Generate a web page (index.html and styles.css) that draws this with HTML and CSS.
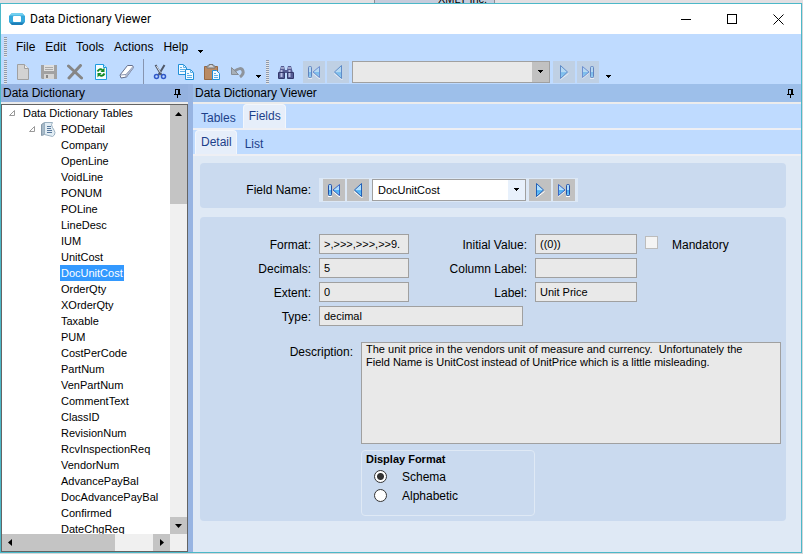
FILE: index.html
```html
<!DOCTYPE html>
<html lang="en">
<head>
    <meta charset="UTF-8">
    <meta name="viewport" content="width=device-width, initial-scale=1.0">
    <title>Data Dictionary Viewer</title>
    <link rel="stylesheet" href="styles.css">
</head>
<body>
    <!-- shared icon shapes -->
    <svg class="defs" width="0" height="0" aria-hidden="true">
        <linearGradient id="nav-fill" x1="0" y1="0" x2="0" y2="1">
            <stop offset="0" stop-color="#a8d8fa"/>
            <stop offset=".5" stop-color="#b4e2ff"/>
            <stop offset=".55" stop-color="#4aaef2"/>
            <stop offset="1" stop-color="#7cd0fb"/>
        </linearGradient>
        <symbol id="first" viewBox="0 0 16 16">
            <path d="M2 14.500h4M7 9.500l6 5h1" stroke="#fff" fill="none"/>
            <rect x="2.500" y="2.500" width="3" height="11" rx="1" fill="url(#nav-fill)" stroke="#2450a8"/>
            <path d="M13.500 2.500v11L7 8z" fill="url(#nav-fill)" stroke="#3b66c4"/>
        </symbol>
        <symbol id="prev" viewBox="0 0 16 16">
            <path d="M4 9.500l7.500 6h1" stroke="#fff" fill="none"/>
            <path d="M11.500 1.500v13L4.500 8z" fill="url(#nav-fill)" stroke="#2060b8"/>
        </symbol>
        <symbol id="next" viewBox="0 0 16 16">
            <path d="M4.500 15.500l8-6" stroke="#fff" fill="none"/>
            <path d="M4.500 1.500v13L11.500 8z" fill="url(#nav-fill)" stroke="#2060b8"/>
        </symbol>
        <symbol id="last" viewBox="0 0 16 16">
            <path d="M10 14.500h4M2.500 14.500l6-5" stroke="#fff" fill="none"/>
            <rect x="10.500" y="2.500" width="3" height="11" rx="1" fill="url(#nav-fill)" stroke="#2450a8"/>
            <path d="M2.500 2.500v11L9 8z" fill="url(#nav-fill)" stroke="#3b66c4"/>
        </symbol>
        <symbol id="down" viewBox="0 0 5 3"><path d="M0 0h5v1H4v1H3v1H2V2H1V1H0z"/></symbol>
        <symbol id="pin" viewBox="0 0 7 9"><path d="M1 0h5v5h1v1H4v3H3V6H0V5h1zM2 1v4h2V1z" fill-rule="evenodd"/></symbol>
    </svg>

    <div class="backdrop"><span class="backdrop-tab">XMLT Inc.</span></div>

    <main class="window">
        <header class="titlebar">
            <svg class="logo" width="16" height="14" viewBox="0 0 16 14">
                <path d="M3 1h10l3 3v6l-3 3H3l-3-3V4z" fill="#35a8dc"/>
                <path d="M3 1h10l2.500 2.500H.5z" fill="#72d0f0"/>
                <path d="M3 13h10l2.500-2.500H.5z" fill="#1d7fb8"/>
                <rect x="4" y="4" width="8" height="6" rx="1" fill="#fff"/>
            </svg>
            <h1>Data Dictionary Viewer</h1>
            <div class="caption-buttons">
                <button aria-label="Minimize"><svg width="11" height="11"><path d="M0 5.500h10" stroke="#000"/></svg></button>
                <button aria-label="Maximize"><svg width="11" height="11"><rect x=".5" y=".5" width="9" height="9" fill="none" stroke="#000"/></svg></button>
                <button aria-label="Close"><svg width="11" height="11"><path d="M.5.500l10 10M10.500.500l-10 10" stroke="#000"/></svg></button>
            </div>
        </header>

        <nav class="menubar">
            <span class="grip"></span>
            <button>File</button>
            <button>Edit</button>
            <button>Tools</button>
            <button>Actions</button>
            <button>Help</button>
            <svg class="more" width="5" height="3"><use href="#down"/></svg>
        </nav>

        <div class="toolbar">
            <div class="tools">
                <span class="grip"></span>
                <button aria-label="New"><svg width="16" height="16"><path d="M2.500.5h7l4 4v11h-11z" fill="#d2d2d2" stroke="#a0a0a0"/><path d="M9.500.5v4h4" fill="#eee" stroke="#a0a0a0"/></svg></button>
                <button aria-label="Save"><svg width="16" height="16"><path d="M0 1h16v14H1l-1-1z" fill="#a2a2a2"/><path d="M3 1h10v6H3z" fill="#e0e0e0"/><path d="M4 3.500h8M4 5.500h8" stroke="#aaa"/><path d="M3 10h10v5H3z" fill="#d4d4d4"/><path d="M5 11h2v3H5z" fill="#888"/></svg></button>
                <button aria-label="Delete"><svg width="16" height="16"><path d="M1.500 2l13 12M13.500 1.500L2 14" stroke="#868686" stroke-width="3" stroke-linecap="round"/></svg></button>
                <button aria-label="Refresh"><svg width="16" height="16"><path d="M2.500.5h8l3 3v12h-11z" fill="#f4fcff" stroke="#1c9be0"/><path d="M10.500.5v3h3" fill="#c8ecff" stroke="#1c9be0"/><path d="M4.500 7.500q2-3.500 5-1.500M11.500 9.500q-2 3.500-5 1.500" stroke="#128a24" stroke-width="2" fill="none"/><path d="M11.500 3.500v4.500H7.500zM4.500 13.500V9h4z" fill="#128a24"/></svg></button>
                <button aria-label="Clear"><svg width="16" height="16"><path d="M8.500 1.500h5l1 2-7 9.500-5.500 1-1-3z" fill="#fff" stroke="#66708c"/><path d="M1.500 11l5.500-.500 7-8M7 10.500v3" stroke="#8a94b0" fill="none"/><path d="M7 10.500l7-8 .5 1-7 9.500z" fill="#a8b4cc"/></svg></button>
                <span class="divider"></span>
                <button aria-label="Cut"><svg width="16" height="16"><path d="M3.500 1l6 10M12.500 1l-6 10" stroke="#505868" stroke-width="2"/><path d="M4.500 2l4 6.500" stroke="#dfe5ee"/><circle cx="4.500" cy="12.500" r="2" fill="none" stroke="#3058c8" stroke-width="1.500"/><circle cx="11.500" cy="12.500" r="2" fill="none" stroke="#3058c8" stroke-width="1.500"/></svg></button>
                <button aria-label="Copy"><svg width="17" height="16"><path d="M.5.5h5l3 3v7h-8z" fill="#f2faff" stroke="#2090d8"/><path d="M5.500.5v3h3M2 3.500h2M2 5.500h5M2 7.500h5" stroke="#60b0e8" fill="none"/><path d="M7.500 5.500h5l3 3v7h-8z" fill="#f2faff" stroke="#2090d8"/><path d="M12.500 5.500v3h3M9 9.500h2M9 11.500h5M9 13.500h5" stroke="#60b0e8" fill="none"/></svg></button>
                <button aria-label="Paste"><svg width="17" height="16"><path d="M.5 2.500h13v13H.5z" fill="#b98a64" stroke="#966844"/><path d="M3 4V2h2V.5h4V2h2v2z" fill="#d4d4d8" stroke="#777"/><path d="M8.500 6.500h4l3 3v6h-7z" fill="#f2faff" stroke="#2090d8"/><path d="M10 9.500h2M10 11.500h4M10 13.500h4" stroke="#60b0e8"/></svg></button>
                <button aria-label="Undo"><svg width="16" height="16"><path d="M4 7.500q7-5.500 9-.5 1 3-3 6" fill="none" stroke="#8e949c" stroke-width="3"/><path d="M1.500 3.500v7h7z" fill="#a8b0b8" stroke="#888e96"/></svg></button>
                <svg class="more" width="5" height="3"><use href="#down"/></svg>
            </div>
            <div class="finder">
                <span class="grip"></span>
                <button class="find" aria-label="Search"><svg width="16" height="14"><path d="M3 1h3l1 4h2l1-4h3l2 7v5H9V8H7v5H1V8z" fill="#555c94"/><path d="M3 3h3M10 3h3" stroke="#e4e6fa"/><path d="M3.500 5v7M11.500 5v7" stroke="#b8bce4" stroke-width="2"/><path d="M.5 7.500h6v6h-6zM9.500 7.500h6v6h-6z" fill="none" stroke="#34386c"/></svg></button>
                <button class="nav-btn" aria-label="First record" disabled><svg width="16" height="16"><use href="#first"/></svg></button>
                <button class="nav-btn" aria-label="Previous record" disabled><svg width="16" height="16"><use href="#prev"/></svg></button>
                <span class="combo combo-disabled">
                    <select aria-label="Record" disabled><option></option></select>
                    <span class="combo-arrow"><svg width="5" height="3"><use href="#down"/></svg></span>
                </span>
                <button class="nav-btn" aria-label="Next record" disabled><svg width="16" height="16"><use href="#next"/></svg></button>
                <button class="nav-btn" aria-label="Last record" disabled><svg width="16" height="16"><use href="#last"/></svg></button>
                <svg class="more" width="5" height="3"><use href="#down"/></svg>
            </div>
        </div>

        <div class="workspace">
            <!-- tree pane -->
            <aside class="tree-pane">
                <h2 class="pane-title">Data Dictionary <svg width="7" height="9"><use href="#pin"/></svg></h2>
                <div class="tree-box">
                    <ul class="tree">
                        <li class="root"><svg width="7" height="7"><path d="M.5 5.500h5v-5z" fill="#fff" stroke="#999"/></svg><span>Data Dictionary Tables</span></li>
                        <li class="branch"><svg width="7" height="7"><path d="M.5 5.500h5v-5z" fill="#fff" stroke="#999"/></svg>
                            <svg class="table-icon" width="15" height="15"><path d="M.5 2.500l3-2v12l-3 1z" fill="#a8bac8" stroke="#8498a8"/><path d="M3.500.5h8q-2 2 0 5t2.500 5q0 3-2.500 4l-8-2z" fill="#e2edf4" stroke="#9ab0c0"/><path d="M6 4.500h4M6 6.500h4M6 8.500h5M6 10.500h5" stroke="#58789c"/></svg><span>PODetail</span></li>
                        <li>Company</li>
                        <li>OpenLine</li>
                        <li>VoidLine</li>
                        <li>PONUM</li>
                        <li>POLine</li>
                        <li>LineDesc</li>
                        <li>IUM</li>
                        <li>UnitCost</li>
                        <li><span class="selected">DocUnitCost</span></li>
                        <li>OrderQty</li>
                        <li>XOrderQty</li>
                        <li>Taxable</li>
                        <li>PUM</li>
                        <li>CostPerCode</li>
                        <li>PartNum</li>
                        <li>VenPartNum</li>
                        <li>CommentText</li>
                        <li>ClassID</li>
                        <li>RevisionNum</li>
                        <li>RcvInspectionReq</li>
                        <li>VendorNum</li>
                        <li>AdvancePayBal</li>
                        <li>DocAdvancePayBal</li>
                        <li>Confirmed</li>
                        <li>DateChgReq</li>
                    </ul>
                    <div class="scroll-v">
                        <span class="scroll-thumb"><svg width="7" height="4"><path d="M0 4h7L3.500 0z"/></svg></span>
                        <span class="scroll-end"><svg width="7" height="4"><path d="M0 0h7L3.500 4z"/></svg></span>
                    </div>
                    <div class="scroll-h">
                        <span class="scroll-thumb"><svg width="4" height="7"><path d="M4 0v7L0 3.500z"/></svg></span>
                        <span class="scroll-end"><svg width="4" height="7"><path d="M0 0v7l4-3.500z"/></svg></span>
                    </div>
                    <div class="scroll-corner"></div>
                </div>
            </aside>

            <!-- viewer pane -->
            <section class="viewer-pane">
                <h2 class="pane-title">Data Dictionary Viewer <svg width="7" height="9"><use href="#pin"/></svg></h2>
                <div class="tabs tabs-outer">
                    <button class="tab">Tables</button>
                    <button class="tab active">Fields</button>
                </div>
                <div class="tabs">
                    <button class="tab active">Detail</button>
                    <button class="tab">List</button>
                </div>
                <form class="detail">
                    <div class="panel picker">
                        <label for="field-name">Field Name:</label>
                        <div class="picker-nav">
                            <button type="button" class="nav-btn" aria-label="First field"><svg width="16" height="16"><use href="#first"/></svg></button>
                            <button type="button" class="nav-btn" aria-label="Previous field"><svg width="16" height="16"><use href="#prev"/></svg></button>
                            <span class="combo">
                                <select id="field-name"><option>DocUnitCost</option></select>
                                <span class="combo-arrow"><svg width="5" height="3"><use href="#down"/></svg></span>
                            </span>
                            <button type="button" class="nav-btn" aria-label="Next field"><svg width="16" height="16"><use href="#next"/></svg></button>
                            <button type="button" class="nav-btn" aria-label="Last field"><svg width="16" height="16"><use href="#last"/></svg></button>
                        </div>
                    </div>

                    <div class="panel">
                        <div class="fields">
                            <label class="row-start" for="format">Format:</label>
                            <input id="format" type="text" value="&gt;,&gt;&gt;&gt;,&gt;&gt;&gt;,&gt;&gt;9." readonly>
                            <label for="initial">Initial Value:</label>
                            <input id="initial" type="text" value="((0))" readonly>
                            <div class="mandatory">
                                <input id="mandatory" type="checkbox" disabled>
                                <label for="mandatory">Mandatory</label>
                            </div>
                            <label class="row-start" for="decimals">Decimals:</label>
                            <input id="decimals" type="text" value="5" readonly>
                            <label for="column-label">Column Label:</label>
                            <input id="column-label" type="text" value="" readonly>
                            <label class="row-start" for="extent">Extent:</label>
                            <input id="extent" type="text" value="0" readonly>
                            <label for="label">Label:</label>
                            <input id="label" type="text" value="Unit Price" readonly>
                            <label class="row-start" for="type">Type:</label>
                            <input id="type" class="wide" type="text" value="decimal" readonly>
                        </div>
                        <div class="description">
                            <label for="description">Description:</label>
                            <textarea id="description" readonly>The unit price in the vendors unit of measure and currency.  Unfortunately the
Field Name is UnitCost instead of UnitPrice which is a little misleading.</textarea>
                        </div>
                        <fieldset class="display-format">
                            <legend>Display Format</legend>
                            <label><input type="radio" name="display" checked>Schema</label>
                            <label><input type="radio" name="display">Alphabetic</label>
                        </fieldset>
                    </div>
                </form>
            </section>
        </div>
    </main>
</body>
</html>
```
FILE: styles.css
```css
* {
    margin: 0;
    padding: 0;
    box-sizing: border-box;
}

body {
    display: flex;
    flex-direction: column;
    height: 100vh;
    overflow: hidden;
    background: #d6d6d8;
    color: #000;
    font: 12px/16px "Liberation Sans", Arial, sans-serif;
}

button,
input,
select,
textarea {
    font: inherit;
    color: inherit;
    border: none;
    background: none;
}

svg {
    display: block;
    flex: none;
}

.defs {
    position: absolute;
}

/* strip of the application behind the window */
.backdrop {
    display: flex;
    flex: none;
    align-items: flex-end;
    height: 3px;
    padding-left: 374px;
    background: #e2dfe2;
    overflow: hidden;
}

.backdrop-tab {
    width: 121px;
    padding-left: 63px;
    border: solid #8c8c94;
    border-width: 0 1px;
    background: #c6ccdc;
    font-size: 11px;
    line-height: 8px;
}

.window {
    display: flex;
    flex: 1;
    flex-direction: column;
    min-height: 0;
    margin: 0 1px 1px 0;
    border: 1px solid #4cb8c8;
    background: #bfdbff;
}

/* title bar */
.titlebar {
    display: flex;
    align-items: center;
    height: 30px;
    padding-left: 8px;
    background: #fff;
}

.titlebar h1 {
    flex: 1;
    padding-left: 5px;
    font: 12px/16px Roboto, "Noto Sans", sans-serif;
}

.caption-buttons {
    display: flex;
}

.caption-buttons button {
    display: flex;
    align-items: center;
    justify-content: center;
    width: 46px;
    height: 28px;
}

/* menus and toolbars */
.menubar,
.tools,
.finder {
    display: flex;
    align-items: center;
    height: 25px;
}

.grip {
    width: 3px;
    height: 24px;
    background: repeating-linear-gradient(#8d99ad 0 1px, #e6e6e6 1px 2px);
}

.menubar {
    padding-left: 3px;
}

.menubar button {
    padding: 0 5px;
}

.menubar .grip {
    height: 20px;
    margin-right: 4px;
}

.more {
    align-self: flex-end;
    margin: 0 0 6px 5px;
}

.toolbar {
    display: flex;
}

.tools {
    width: 262px;
    padding-left: 3px;
}

.tools button {
    display: flex;
    align-items: center;
    justify-content: center;
    width: 26px;
    height: 24px;
}

.tools .grip {
    margin-right: 3px;
}

.divider {
    width: 1px;
    height: 25px;
    margin: 0 3px;
    background: #8795b0;
}

.finder {
    gap: 2px;
    padding-left: 3px;
}

.find {
    width: 30px;
    padding-left: 7px;
}

.nav-btn {
    display: flex;
    align-items: center;
    justify-content: center;
    width: 22px;
    height: 22px;
    background: #c1c1c1;
}

.nav-btn:disabled {
    background: #bfd0e4;
}

.nav-btn:disabled svg {
    opacity: 0.6;
}

.combo {
    position: relative;
    width: 154px;
    height: 22px;
    margin: 0 1px;
    border: 1px solid #a0a0a0;
    background: #fff;
}

.combo select {
    width: 100%;
    height: 20px;
    padding-left: 5px;
    font-size: 11px;
    appearance: none;
}

.combo-arrow {
    position: absolute;
    top: 0;
    right: 0;
    display: flex;
    align-items: center;
    justify-content: center;
    width: 17px;
    height: 20px;
    background: #e8f1fc;
    pointer-events: none;
}

.combo-disabled {
    width: 198px;
    background: #e9e9e9;
}

.combo-disabled .combo-arrow {
    background: #c1c1c1;
}

/* panes */
.workspace {
    display: flex;
    flex: 1;
    min-height: 0;
}

.tree-pane {
    display: flex;
    flex: none;
    flex-direction: column;
    width: 192px;
    padding-right: 5px;
    background: #97b4e2;
}

.viewer-pane {
    display: flex;
    flex: 1;
    flex-direction: column;
    min-width: 0;
    background: #dfe9f5;
}

.pane-title {
    display: flex;
    flex: none;
    align-items: center;
    justify-content: space-between;
    height: 20px;
    padding: 0 7px 0 2px;
    border-bottom: 2px solid #ececec;
    background: #9dbfea;
    font-size: 12px;
    font-weight: normal;
}

.tree-pane .pane-title {
    background: #94b2e0;
}

/* tree */
.tree-box {
    display: grid;
    flex: 1;
    grid-template: 1fr 17px / 1fr 17px;
    min-height: 0;
    border: 1px solid #646464;
    background: #fff;
}

.tree {
    min-height: 0;
    overflow: hidden;
    list-style: none;
    font-size: 11px;
    white-space: nowrap;
}

.tree li {
    height: 16px;
    padding-left: 59px;
}

.tree .root,
.tree .branch {
    display: flex;
    align-items: center;
    gap: 7px;
    padding-left: 7px;
}

.tree .branch {
    gap: 5px;
    padding-left: 27px;
}

.selected {
    display: inline-block;
    margin-left: -1px;
    padding: 0 1px;
    background: #3399ff;
    color: #fff;
}

.scroll-v,
.scroll-h {
    display: flex;
    justify-content: space-between;
    background: #f0f0f0;
}

.scroll-v {
    flex-direction: column;
}

.scroll-thumb,
.scroll-end {
    display: flex;
    align-items: center;
    justify-content: center;
    background: #c4c4c4;
}

.scroll-v .scroll-thumb {
    align-items: flex-start;
    height: 23%;
    padding-top: 7px;
}

.scroll-h .scroll-thumb {
    justify-content: flex-start;
    width: 67%;
    padding-left: 6px;
}

.scroll-v .scroll-end {
    height: 17px;
}

.scroll-h .scroll-end {
    width: 17px;
}

.scroll-corner {
    background: #f0f0f0;
}

/* tabs */
.tabs {
    display: flex;
    align-items: flex-end;
    height: 26px;
    padding-left: 2px;
    border-bottom: 2px solid #eeeff4;
    background: #bfdbff;
    color: #1c3f8a;
}

.tab {
    height: 22px;
    padding: 2px 7px 0 8px;
}

.tab.active {
    height: 24px;
    padding: 0 4px 2px 5px;
    border: solid #f2f6fc;
    border-width: 1px 1px 0;
    border-radius: 4px 4px 0 0;
    background: #e6eefa;
}

.tabs-outer {
    padding-left: 0;
}

/* detail form */
.detail {
    display: flex;
    flex-direction: column;
    gap: 9px;
    padding: 7px 15px 0 7px;
}

.panel {
    padding: 17px 5px 5px 0;
    border-radius: 4px;
    background: #cadaef;
}

.picker {
    display: flex;
    align-items: center;
    gap: 8px;
    height: 45px;
    padding: 8px 0 0;
}

.picker > label {
    width: 111px;
    text-align: right;
}

.picker-nav {
    display: flex;
    align-items: center;
    gap: 2px;
    height: 24px;
    padding: 0 3px 0 4px;
    background: #dce8f6;
}

.fields {
    display: grid;
    grid-template-columns: 111px 90px 110px 102px auto;
    gap: 4px 8px;
    align-items: center;
}

.fields > label,
.description label {
    padding-top: 2px;
    text-align: right;
}

.fields .row-start {
    grid-column: 1;
}

.fields input[type="text"] {
    width: 100%;
    height: 20px;
    padding: 0 4px;
    border: 1px solid #a0a0a0;
    background: #e9e9e9;
    font-size: 11px;
}

.fields input.wide[type="text"] {
    grid-column: 2 / 4;
    width: 204px;
}

.mandatory {
    display: flex;
    align-items: flex-start;
    gap: 14px;
    height: 20px;
}

.mandatory label {
    padding-top: 3px;
}

.mandatory input {
    width: 13px;
    height: 13px;
    margin-top: 2px;
    border: 1px solid #bcbcbc;
    background: #f4f4f4;
    appearance: none;
}

.description {
    display: flex;
    gap: 8px;
    margin-top: 16px;
}

.description label {
    width: 153px;
}

.description textarea {
    flex: 1;
    height: 102px;
    padding: 0 4px;
    border: 1px solid #a0a0a0;
    background: #e9e9e9;
    font-size: 11px;
    line-height: 13px;
    resize: none;
}

.display-format {
    width: 174px;
    height: 66px;
    margin: 6px 0 0 161px;
    padding: 0 4px;
    border: 1px solid #dfe9f5;
    border-radius: 4px;
}

.display-format legend {
    float: left;
    width: 100%;
    font-size: 11px;
    font-weight: bold;
}

.display-format label {
    display: flex;
    clear: both;
    align-items: center;
    gap: 15px;
    height: 19px;
    padding-left: 8px;
}

.display-format input {
    width: 13px;
    height: 13px;
    border: 1px solid #333;
    border-radius: 50%;
    background: #fff;
    appearance: none;
}

.display-format input:checked {
    background: radial-gradient(circle, #333 0 3px, #fff 4px);
}
```
